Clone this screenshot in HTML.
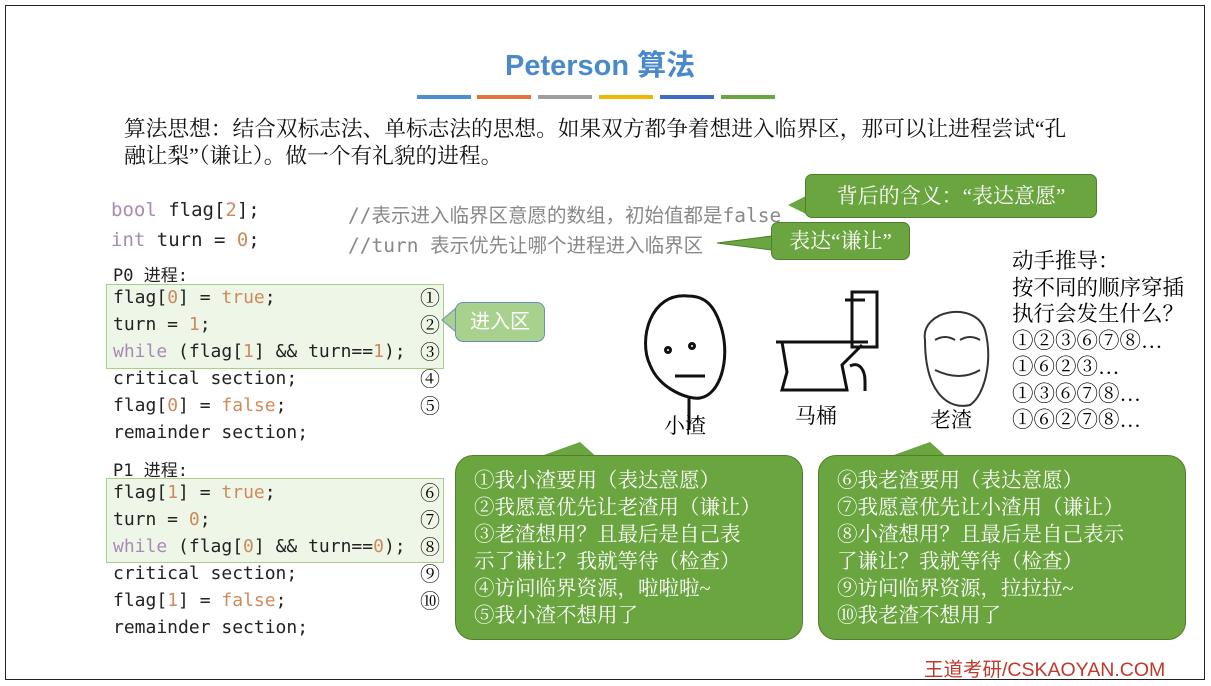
<!DOCTYPE html>
<html><head><meta charset="utf-8"><style>
body{margin:0;width:1211px;height:686px;background:#fff;position:relative;overflow:hidden;font-family:"Liberation Sans","Noto Sans CJK SC",sans-serif}
.frame{position:absolute;left:5px;top:5px;width:1198px;height:673px;border:1.5px solid #222}
.a{position:absolute;white-space:nowrap}
.mono{font-family:"DejaVu Sans Mono","Liberation Mono","Noto Sans CJK SC",monospace;font-size:18px;color:#222}
.serif{font-family:"Liberation Serif","Noto Serif CJK SC",serif}
.bar{position:absolute;top:95px;height:4px;width:54px}
.codebox{position:absolute;background:#eef6e8;border:1px solid #a6cf8a}
.gb{position:absolute;background:#6aa53f;border:1.5px solid #4f7f2d;color:#fff;border-radius:18px;font-family:"Liberation Serif","Noto Serif CJK SC",serif;font-size:20px;line-height:27px}
.pur{color:#a98ab4}.num{color:#d08a5a}.cm{color:#888}
</style></head><body>
<div class="frame"></div>
<div class="a" style="left:505px;top:42px;font-size:29px;font-weight:bold;color:#4a8acb">Peterson 算法</div>
<div class="bar" style="left:417px;background:#4a90d0"></div>
<div class="bar" style="left:477px;background:#e3733a"></div>
<div class="bar" style="left:538px;background:#9e9e9e"></div>
<div class="bar" style="left:599px;background:#f0b800"></div>
<div class="bar" style="left:660px;background:#3f6cc0"></div>
<div class="bar" style="left:721px;background:#6aa53f"></div>
<div class="a serif" style="left:124px;top:116px;font-size:21.7px;line-height:27px;color:#111;white-space:normal;width:1050px">算法思想：结合双标志法、单标志法的思想。如果双方都争着想进入临界区，那可以让进程尝试“孔<br>融让梨”（谦让）。做一个有礼貌的进程。</div>

<div class="a mono" style="left:111px;top:199px;font-size:19px"><span class="pur">bool</span> flag[<span class="num">2</span>];</div>
<div class="a mono cm" style="left:348px;top:199px;font-size:19.5px;color:#888">//表示进入临界区意愿的数组，初始值都是false</div>
<div class="a mono" style="left:111px;top:229px;font-size:19px"><span class="pur">int</span> turn = <span class="num">0</span>;</div>
<div class="a mono" style="left:348px;top:229px;font-size:19.5px;color:#888">//turn 表示优先让哪个进程进入临界区</div>

<div class="a mono" style="left:113px;top:261px;font-size:17px">P0 进程:</div>
<div class="codebox" style="left:106px;top:284px;width:336px;height:83px"></div>
<div class="a mono" style="left:113px;top:287px">flag[<span class="num">0</span>] = <span class="num">true</span>;</div>
<div class="a mono" style="left:113px;top:314px">turn = <span class="num">1</span>;</div>
<div class="a mono" style="left:113px;top:341px"><span class="pur">while</span> (flag[<span class="num">1</span>] &amp;&amp; turn==<span class="num">1</span>);</div>
<div class="a mono" style="left:113px;top:368px">critical section;</div>
<div class="a mono" style="left:113px;top:395px">flag[<span class="num">0</span>] = <span class="num">false</span>;</div>
<div class="a mono" style="left:113px;top:422px">remainder section;</div>
<div class="a serif" style="left:420px;top:286px;font-size:20px;line-height:27px">①<br>②<br>③<br>④<br>⑤</div>

<div class="a mono" style="left:113px;top:456px;font-size:17px">P1 进程:</div>
<div class="codebox" style="left:106px;top:478px;width:336px;height:83px"></div>
<div class="a mono" style="left:113px;top:482px">flag[<span class="num">1</span>] = <span class="num">true</span>;</div>
<div class="a mono" style="left:113px;top:509px">turn = <span class="num">0</span>;</div>
<div class="a mono" style="left:113px;top:536px"><span class="pur">while</span> (flag[<span class="num">0</span>] &amp;&amp; turn==<span class="num">0</span>);</div>
<div class="a mono" style="left:113px;top:563px">critical section;</div>
<div class="a mono" style="left:113px;top:590px">flag[<span class="num">1</span>] = <span class="num">false</span>;</div>
<div class="a mono" style="left:113px;top:617px">remainder section;</div>
<div class="a serif" style="left:420px;top:481px;font-size:20px;line-height:27px">⑥<br>⑦<br>⑧<br>⑨<br>⑩</div>

<svg class="a" style="left:0;top:0" width="1211" height="686">
<path d="M788 205 L806 196 L806 214 Z" fill="#6aa53f"/>
<path d="M717 243 L772 236 L772 250 Z" fill="#6aa53f" stroke="#4f7f2d"/>
<path d="M442 320 L456 308 L456 332 Z" fill="#a9d18e" stroke="#6a8fb8"/>
<path d="M530 460 L580 442 L600 460 Z" fill="#6aa53f"/>
<path d="M880 460 L930 442 L950 460 Z" fill="#6aa53f"/>
</svg>
<div class="gb" style="left:805px;top:174px;width:290px;height:42px;border-radius:7px;text-align:center;line-height:42px;font-size:21px">背后的含义：“表达意愿”</div>
<div class="gb" style="left:771px;top:222px;width:137px;height:36px;border-radius:7px;text-align:center;line-height:36px;font-size:21px">表达“谦让”</div>
<div class="a" style="left:455px;top:302px;width:88px;height:38px;background:#a9d18e;border:1.5px solid #6a8fb8;border-radius:8px;color:#fff;font-size:20px;text-align:center;line-height:38px">进入区</div>

<svg class="a" style="left:630px;top:280px" width="300" height="150" fill="none" stroke="#111" stroke-width="3">
<path d="M58 16 C20 12 8 60 20 85 C30 110 60 120 70 118 C90 115 100 80 92 50 C85 25 75 16 58 16Z"/>
<circle cx="38" cy="70" r="2.5"/><circle cx="62" cy="66" r="2.5"/><path d="M45 96 H75"/><path d="M59 118 V150"/>
<path d="M222 12 h25 v55 h-25z M215 20 h20"/><path d="M146 62 h92 M152 62 l5 30 l-5 18 h65 l-5 -25 l20 -20"/>
<path d="M220 86 c10 -5 15 5 15 15 v10"/>
</svg>
<svg class="a" style="left:915px;top:300px" width="80" height="110" fill="none" stroke="#333" stroke-width="2">
<path d="M10 40 C5 10 60 0 70 30 C78 60 70 95 55 105 C35 110 10 95 10 40Z"/>
<path d="M20 40 q10 -6 20 0 M45 40 q10 -6 20 0 M20 70 q25 12 45 0"/>
</svg>
<div class="a serif" style="left:664px;top:410px;font-size:21px">小渣</div>
<div class="a serif" style="left:795px;top:400px;font-size:21px">马桶</div>
<div class="a serif" style="left:930px;top:404px;font-size:21px">老渣</div>
<div class="a serif" style="left:1012px;top:248px;font-size:21.5px;line-height:26.5px">动手推导：<br>按不同的顺序穿插<br>执行会发生什么？<br>①②③⑥⑦⑧…<br>①⑥②③…<br>①③⑥⑦⑧…<br>①⑥②⑦⑧…</div>

<div class="gb" style="left:455px;top:455px;width:348px;height:185px;padding:12px 0 0 18px;box-sizing:border-box;font-size:20.5px;line-height:27px">①我小渣要用（表达意愿）<br>②我愿意优先让老渣用（谦让）<br>③老渣想用？且最后是自己表<br>示了谦让？我就等待（检查）<br>④访问临界资源，啦啦啦~<br>⑤我小渣不想用了</div>
<div class="gb" style="left:818px;top:455px;width:368px;height:185px;padding:12px 0 0 18px;box-sizing:border-box;font-size:20.5px;line-height:27px">⑥我老渣要用（表达意愿）<br>⑦我愿意优先让小渣用（谦让）<br>⑧小渣想用？且最后是自己表示<br>了谦让？我就等待（检查）<br>⑨访问临界资源，拉拉拉~<br>⑩我老渣不想用了</div>

<div class="a" style="left:924px;top:653px;font-size:19.5px;color:#c0392b">王道考研/CSKAOYAN.COM</div>
</body></html>
